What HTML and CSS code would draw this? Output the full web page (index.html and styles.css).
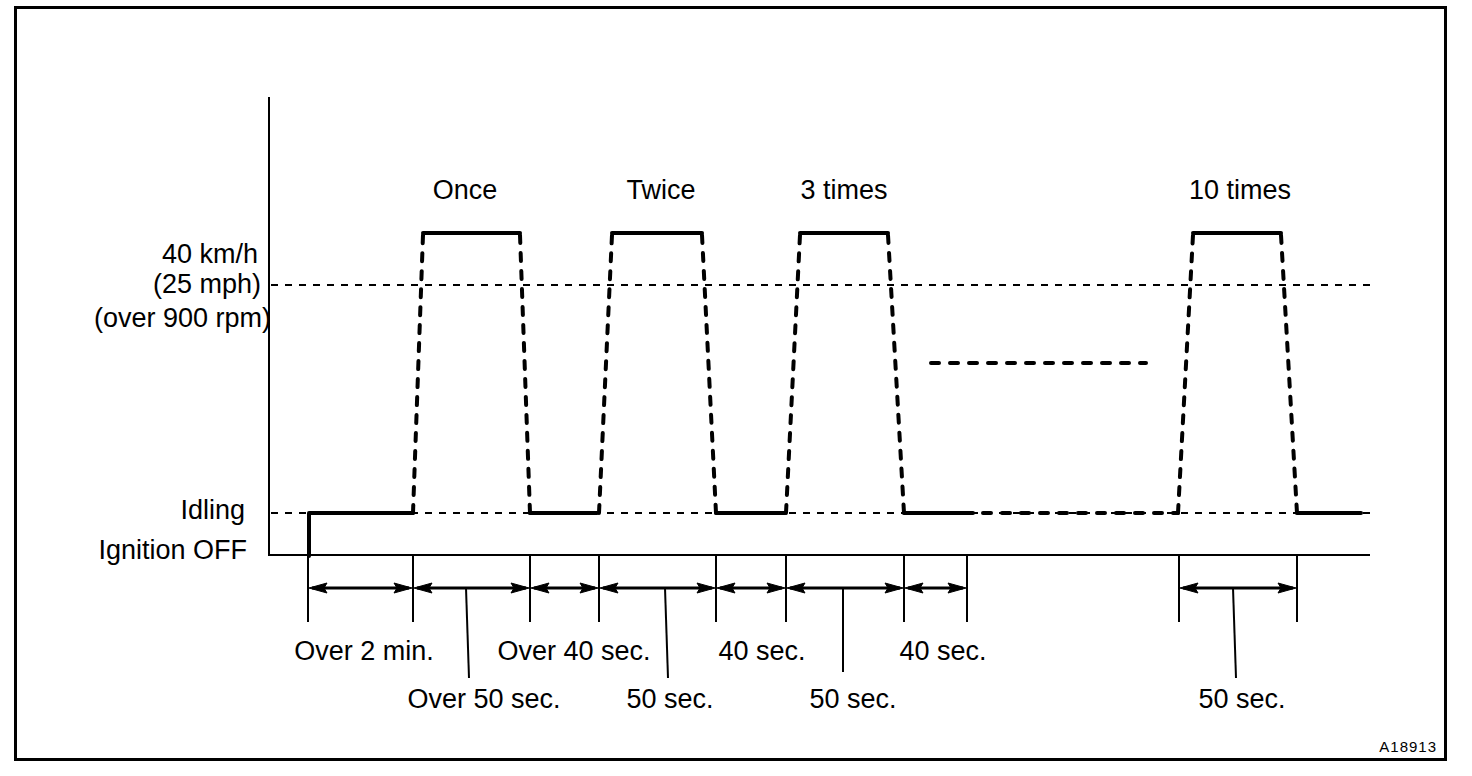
FILE: index.html
```html
<!DOCTYPE html>
<html lang="en">
<head>
<meta charset="utf-8">
<title>A18913</title>
<link rel="stylesheet" href="styles.css">
</head>
<body>
<div class="frame">
<svg class="chart" viewBox="17 9 1427 749" width="1427" height="749" xmlns="http://www.w3.org/2000/svg">
  <!-- axes -->
  <line class="axis" x1="269" y1="97" x2="269" y2="556"/>
  <line class="axis" x1="268" y1="555" x2="1370" y2="555"/>
  <!-- reference dashed lines -->
  <line class="thin-dash" x1="271" y1="285" x2="1372" y2="285"/>
  <line class="thin-dash" x1="271" y1="513" x2="1372" y2="513"/>

  <!-- engine trace -->
  <polyline class="bold" points="309,556 309,513 413,513"/>
  <line class="bold" x1="423" y1="233" x2="520" y2="233"/>
  <line class="bold" x1="612" y1="233" x2="702" y2="233"/>
  <line class="bold" x1="800" y1="233" x2="888" y2="233"/>
  <line class="bold" x1="1193" y1="233" x2="1281" y2="233"/>
  <line class="bold" x1="530" y1="513" x2="597" y2="513"/>
  <line class="bold" x1="716" y1="513" x2="785" y2="513"/>
  <line class="bold" x1="904" y1="513" x2="973" y2="513"/>
  <line class="bold" x1="1297" y1="513" x2="1361" y2="513"/>

  <line class="dots" x1="413" y1="513" x2="423" y2="235"/>
  <line class="dots" x1="520" y1="235" x2="530" y2="513"/>
  <line class="dots" x1="599" y1="513" x2="612" y2="235"/>
  <line class="dots" x1="702" y1="235" x2="716" y2="513"/>
  <line class="dots" x1="786" y1="513" x2="800" y2="235"/>
  <line class="dots" x1="888" y1="235" x2="904" y2="513"/>
  <line class="dots" x1="1178" y1="513" x2="1193" y2="235"/>
  <line class="dots" x1="1281" y1="235" x2="1297" y2="513"/>

  <line class="hdash" x1="983" y1="513" x2="1178" y2="513"/>
  <line class="hdash" x1="931" y1="363" x2="1146" y2="363"/>

  <!-- extension lines -->
  <g class="ext">
    <line x1="308" y1="555" x2="308" y2="622"/>
    <line x1="413" y1="555" x2="413" y2="622"/>
    <line x1="530" y1="555" x2="530" y2="622"/>
    <line x1="599" y1="555" x2="599" y2="622"/>
    <line x1="716" y1="555" x2="716" y2="622"/>
    <line x1="786" y1="555" x2="786" y2="622"/>
    <line x1="904" y1="555" x2="904" y2="622"/>
    <line x1="967" y1="555" x2="967" y2="622"/>
    <line x1="1179" y1="555" x2="1179" y2="622"/>
    <line x1="1297" y1="555" x2="1297" y2="622"/>
  </g>

  <!-- dimension arrows -->
  <g class="dim">
    <line x1="312" y1="588" x2="409" y2="588"/>
    <line x1="417" y1="588" x2="526" y2="588"/>
    <line x1="534" y1="588" x2="595" y2="588"/>
    <line x1="603" y1="588" x2="712" y2="588"/>
    <line x1="720" y1="588" x2="782" y2="588"/>
    <line x1="790" y1="588" x2="900" y2="588"/>
    <line x1="908" y1="588" x2="963" y2="588"/>
    <line x1="1183" y1="588" x2="1293" y2="588"/>
  </g>
  <g class="heads">
    <polygon points="309,588 327,583 324,588 327,593"/>
    <polygon points="412,588 394,583 397,588 394,593"/>
    <polygon points="414,588 432,583 429,588 432,593"/>
    <polygon points="529,588 511,583 514,588 511,593"/>
    <polygon points="531,588 549,583 546,588 549,593"/>
    <polygon points="598,588 580,583 583,588 580,593"/>
    <polygon points="600,588 618,583 615,588 618,593"/>
    <polygon points="715,588 697,583 700,588 697,593"/>
    <polygon points="717,588 735,583 732,588 735,593"/>
    <polygon points="785,588 767,583 770,588 767,593"/>
    <polygon points="787,588 805,583 802,588 805,593"/>
    <polygon points="903,588 885,583 888,588 885,593"/>
    <polygon points="905,588 923,583 920,588 923,593"/>
    <polygon points="966,588 948,583 951,588 948,593"/>
    <polygon points="1180,588 1198,583 1195,588 1198,593"/>
    <polygon points="1296,588 1278,583 1281,588 1278,593"/>
  </g>

  <!-- leader lines -->
  <g class="ext">
    <line x1="466" y1="588" x2="469" y2="678"/>
    <line x1="665" y1="588" x2="668" y2="678"/>
    <line x1="843" y1="588" x2="843" y2="672"/>
    <line x1="1233" y1="588" x2="1236" y2="678"/>
  </g>

  <!-- labels -->
  <g class="label mid">
    <text x="465" y="199">Once</text>
    <text x="661" y="199">Twice</text>
    <text x="844" y="199">3 times</text>
    <text x="1240" y="199">10 times</text>
  </g>
  <g class="label end">
    <text x="258" y="263">40 km/h</text>
    <text x="261" y="293">(25 mph)</text>
    <text x="271" y="327">(over 900 rpm)</text>
    <text x="245" y="519">Idling</text>
    <text x="247" y="559">Ignition OFF</text>
  </g>
  <g class="label mid">
    <text x="364" y="660">Over 2 min.</text>
    <text x="574" y="660">Over 40 sec.</text>
    <text x="762" y="660">40 sec.</text>
    <text x="943" y="660">40 sec.</text>
    <text x="484" y="708">Over 50 sec.</text>
    <text x="670" y="708">50 sec.</text>
    <text x="853" y="708">50 sec.</text>
    <text x="1242" y="708">50 sec.</text>
  </g>
  <text class="code" x="1437" y="752">A18913</text>
</svg>
</div>
</body>
</html>
```

FILE: styles.css
```css
html, body {
  margin: 0;
  padding: 0;
  background: #ffffff;
}

body {
  width: 1472px;
  height: 776px;
  overflow: hidden;
  font-family: "Liberation Sans", Arial, sans-serif;
}

.frame {
  box-sizing: border-box;
  width: 1433px;
  height: 755px;
  margin: 6px 0 0 14px;
  border: 3px solid #000000;
  background: #ffffff;
}

.chart {
  display: block;
}

.axis {
  stroke: #000;
  stroke-width: 2;
}

.thin-dash {
  stroke: #000;
  stroke-width: 2;
  stroke-dasharray: 7 7;
}

.bold {
  fill: none;
  stroke: #000;
  stroke-width: 4;
  stroke-linecap: round;
  stroke-linejoin: round;
}

.dots {
  stroke: #000;
  stroke-width: 4;
  stroke-dasharray: 8 10;
  stroke-linecap: round;
}

.hdash {
  stroke: #000;
  stroke-width: 4;
  stroke-dasharray: 8 11;
  stroke-linecap: round;
}

.ext line {
  stroke: #000;
  stroke-width: 2;
}

.dim line {
  stroke: #000;
  stroke-width: 3;
}

.heads polygon {
  fill: #000;
  stroke: #000;
  stroke-width: 1;
}

.label text {
  font-family: "Liberation Sans", Arial, sans-serif;
  font-size: 27px;
  fill: #000;
}

.label.mid text {
  text-anchor: middle;
}

.label.end text {
  text-anchor: end;
}

.code {
  font-family: "Liberation Sans", Arial, sans-serif;
  font-size: 15px;
  letter-spacing: 1px;
  text-anchor: end;
  fill: #000;
}
```
